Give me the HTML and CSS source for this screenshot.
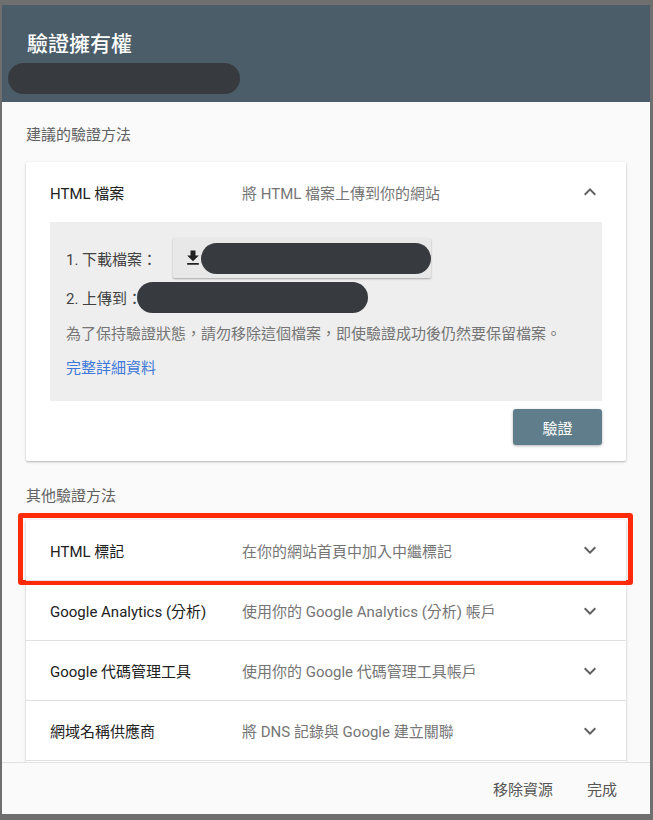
FILE: index.html
```html
<!DOCTYPE html>
<html lang="zh-Hant">
<head>
<meta charset="utf-8">
<title>驗證擁有權</title>
<link rel="stylesheet" href="styles.css">
</head>
<body>
<div class="dialog">
  <div class="header">
    <div class="title">驗證擁有權</div>
    <div class="redact redact-site"></div>
  </div>
  <div class="content">
    <div class="section-label">建議的驗證方法</div>
    <div class="card">
      <div class="row">
        <div class="col-name">HTML 檔案</div>
        <div class="col-desc">將 HTML 檔案上傳到你的網站</div>
        <svg class="chev" viewBox="0 0 24 24"><path d="M7.41 15.41L12 10.83l4.59 4.58L18 14l-6-6-6 6z"/></svg>
      </div>
      <div class="steps">
        <div class="step step-1">
          <span>1. 下載檔案：</span>
          <div class="dl-btn">
            <svg class="dl-icon" viewBox="0 0 24 24"><path d="M19 9h-4V3H9v6H5l7 7 7-7zM5 18v2h14v-2H5z"/></svg>
            <div class="redact redact-file"></div>
          </div>
        </div>
        <div class="step step-2">
          <span>2. 上傳到：</span>
          <div class="redact redact-url"></div>
        </div>
        <p class="note">為了保持驗證狀態，請勿移除這個檔案，即使驗證成功後仍然要保留檔案。</p>
        <a class="link" href="#">完整詳細資料</a>
      </div>
      <div class="actions">
        <button class="verify">驗證</button>
      </div>
    </div>

    <div class="section-label second">其他驗證方法</div>
    <div class="card list">
      <div class="row highlighted">
        <div class="col-name">HTML 標記</div>
        <div class="col-desc">在你的網站首頁中加入中繼標記</div>
        <svg class="chev" viewBox="0 0 24 24"><path d="M16.59 8.59L12 13.17 7.41 8.59 6 10l6 6 6-6z"/></svg>
        <div class="mark"></div>
      </div>
      <div class="row">
        <div class="col-name">Google Analytics (分析)</div>
        <div class="col-desc">使用你的 Google Analytics (分析) 帳戶</div>
        <svg class="chev" viewBox="0 0 24 24"><path d="M16.59 8.59L12 13.17 7.41 8.59 6 10l6 6 6-6z"/></svg>
      </div>
      <div class="row">
        <div class="col-name">Google 代碼管理工具</div>
        <div class="col-desc">使用你的 Google 代碼管理工具帳戶</div>
        <svg class="chev" viewBox="0 0 24 24"><path d="M16.59 8.59L12 13.17 7.41 8.59 6 10l6 6 6-6z"/></svg>
      </div>
      <div class="row">
        <div class="col-name">網域名稱供應商</div>
        <div class="col-desc">將 DNS 記錄與 Google 建立關聯</div>
        <svg class="chev" viewBox="0 0 24 24"><path d="M16.59 8.59L12 13.17 7.41 8.59 6 10l6 6 6-6z"/></svg>
      </div>
      <div class="row">
        <div class="col-name">&nbsp;</div>
      </div>
    </div>
  </div>
  <div class="footer">
    <button class="text-btn">移除資源</button>
    <button class="text-btn">完成</button>
  </div>
</div>
</body>
</html>
```

FILE: styles.css
```css
* { box-sizing: border-box; }

html, body {
  margin: 0;
  height: 100%;
  overflow: hidden;
}

body {
  background: #6f6f6f;
  padding: 5px 3px 0 2px;
  font-family: "Roboto", "Noto Sans CJK TC", sans-serif;
}

.dialog {
  width: 648px;
  height: 809px;
  background: #fafafa;
  display: flex;
  flex-direction: column;
  overflow: hidden;
}

.header {
  height: 97px;
  flex: none;
  background: #4b5d69;
  padding: 25px 25px 0;
}

.title {
  color: #ffffff;
  font-size: 21px;
  line-height: 28px;
  font-weight: 500;
}

.redact {
  background: #373b40;
  border-radius: 16px;
}

.redact-site {
  width: 232px;
  height: 31px;
  margin: 5px 0 0 -19px;
}

.content {
  flex: 1;
  overflow: hidden;
  padding: 23px 24px 0;
}

.section-label {
  font-size: 15px;
  line-height: 20px;
  color: #616161;
  margin-bottom: 17px;
}

.section-label.second {
  margin-top: 25px;
  margin-bottom: 14px;
}

.card {
  background: #ffffff;
  box-shadow: 0 1px 3px rgba(0, 0, 0, 0.22), 0 1px 1px rgba(0, 0, 0, 0.08);
  border-radius: 2px;
}

.row {
  position: relative;
  height: 60px;
  display: flex;
  align-items: center;
  padding: 0 24px;
  font-size: 15px;
}

.list .row + .row {
  border-top: 1px solid #e0e0e0;
}

.col-name {
  width: 192px;
  flex: none;
  color: #212121;
}

.col-desc {
  flex: 1;
  color: #757575;
}

.chev {
  width: 24px;
  height: 24px;
  fill: #616161;
  flex: none;
}

.mark {
  position: absolute;
  top: -7px;
  bottom: -5px;
  left: -8px;
  right: -7px;
  border: 5px solid #ff2a0a;
  border-radius: 3px;
  pointer-events: none;
}

.steps {
  margin: 0 24px;
  background: #eeeeee;
  padding: 16px 16px 23px;
  font-size: 15px;
  color: #424242;
}

.step {
  display: flex;
  align-items: center;
}

.step-1 {
  height: 40px;
}

.step-2 {
  height: 32px;
  margin-top: 3px;
}

.dl-btn {
  margin-left: 16px;
  height: 40px;
  width: 258px;
  background: #e8e8e8;
  border-radius: 2px;
  box-shadow: 0 1px 2px rgba(0, 0, 0, 0.3);
  display: flex;
  align-items: center;
  padding-left: 10px;
}

.dl-icon {
  width: 20px;
  height: 20px;
  fill: #212121;
  flex: none;
  margin-right: -2px;
}

.redact-file {
  width: 231px;
  height: 31px;
}

.redact-url {
  width: 231px;
  height: 31px;
  margin-left: -5px;
}

.note {
  margin: 11px 0 0;
  line-height: 20px;
  color: #757575;
}

.link {
  display: block;
  margin-top: 14px;
  line-height: 20px;
  color: #3d78d8;
  text-decoration: none;
}

.actions {
  display: flex;
  justify-content: flex-end;
  padding: 8px 24px 16px;
}

.verify {
  width: 89px;
  height: 36px;
  border: none;
  border-radius: 3px;
  background: #607d8b;
  color: #ffffff;
  font-family: inherit;
  font-size: 15px;
  box-shadow: 0 1px 3px rgba(0, 0, 0, 0.3);
}

.footer {
  flex: none;
  height: 52px;
  border-top: 1px solid #e0e0e0;
  background: #fafafa;
  display: flex;
  justify-content: flex-end;
  align-items: center;
  gap: 2px;
  padding-right: 17px;
}

.text-btn {
  background: none;
  border: none;
  font-family: inherit;
  font-size: 15px;
  font-weight: 400;
  color: #555555;
  padding: 8px 16px;
}
```
